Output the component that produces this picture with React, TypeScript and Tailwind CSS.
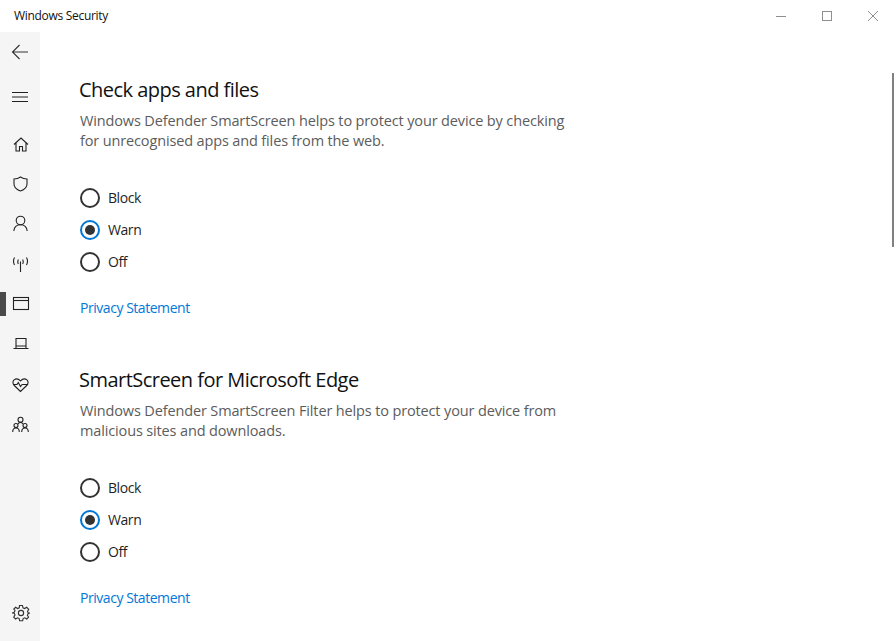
const F = { fontFamily: '"Open Sans", "Noto Sans", sans-serif' };

function Radio({ label, on }: { label: string; on?: boolean }) {
  return (
    <div className="flex h-8 items-center">
      <div className={`flex h-5 w-5 items-center justify-center rounded-full border-2 ${on ? "border-[#0078d7]" : "border-[#333333]"}`}>
        {on && <div className="h-2.5 w-2.5 rounded-full bg-[#333333]" />}
      </div>
      <span className="ml-2 text-[14px] tracking-[-0.42px] text-[#1f1f1f]">{label}</span>
    </div>
  );
}

function Section({ title, lines }: { title: string; lines: string[] }) {
  return (
    <section className="h-[290px]">
      <h2 className="-ml-px h-7 text-[20px] leading-7 tracking-[-0.53px] text-[#111111]">{title}</h2>
      <div className="mt-[7px] text-[14.5px] leading-5 tracking-[-0.14px] text-[#5c5c5c]">
        {lines.map((l) => <div key={l} className="whitespace-nowrap">{l}</div>)}
      </div>
      <div className="mt-[30.5px]">
        <Radio label="Block" />
        <Radio label="Warn" on />
        <Radio label="Off" />
      </div>
      <div className="mt-[20.5px] text-[14px] leading-5 tracking-[-0.46px] text-[#0078d7]">Privacy Statement</div>
    </section>
  );
}

const P = { fill: "none", stroke: "#222222", strokeWidth: 1.1 };

function NavIcon({ children, active }: { children: React.ReactNode; active?: boolean }) {
  return (
    <div className="relative flex h-10 w-10 items-center justify-center">
      {active && <div className="absolute left-0 top-[8px] h-6 w-[6px] bg-[#4a4a4a]" />}
      <svg width="20" height="20" viewBox="0 0 20 20" {...P}>{children}</svg>
    </div>
  );
}

export default function App() {
  return (
    <div className="flex h-[641px] w-[896px] flex-col overflow-hidden bg-white" style={F}>
      <header className="flex h-8 shrink-0 items-center justify-between">
        <span className="ml-[14px] text-[12px] tracking-[-0.3px] text-[#111111]">Windows Security</span>
        <div className="flex items-center">
          <svg width="46" height="32" viewBox="0 0 46 32" stroke="#8f8f8f" fill="none"><path d="M18 16.500h10" /></svg>
          <svg width="46" height="32" viewBox="0 0 46 32" stroke="#8f8f8f" fill="none"><rect x="18.500" y="11.500" width="9" height="9" /></svg>
          <svg width="46" height="32" viewBox="0 0 46 32" stroke="#8f8f8f" fill="none"><path d="M18 11l10 10M28 11L18 21" /></svg>
        </div>
      </header>
      <div className="flex min-h-0 flex-1">
        <nav className="flex w-10 shrink-0 flex-col bg-[#f5f5f5]">
          <div className="flex h-10 items-center justify-center">
            <svg width="18" height="16" viewBox="0 0 18 16" fill="none" stroke="#333333" strokeWidth="1.1"><path d="M17 8H1.500M8.500 1L1.500 8l7 7" /></svg>
          </div>
          <div className="mt-[5px] flex h-10 items-center justify-center">
            <svg width="18" height="12" viewBox="0 0 18 12" fill="none" stroke="#222222" strokeWidth="1.1"><path d="M1 1.500h16M1 6h16M1 10.500h16" /></svg>
          </div>
          <div className="mt-[7px]">
            <NavIcon><path d="M4 10.500l7-6.500 7 6.500M6 9V17h3.500v-4.500h3V17H16V9" /></NavIcon>
            <NavIcon><path d="M10.500 3c2 1.400 4.300 2 6.500 2v5c0 3.400-2.600 5.700-6.500 7-3.900-1.300-6.500-3.600-6.500-7V5c2.200 0 4.500-.6 6.500-2z" /></NavIcon>
            <NavIcon><circle cx="10.500" cy="6.500" r="4.300" /><path d="M3.800 17c.4-3.800 3-6.200 6.700-6.200s6.300 2.400 6.700 6.200" /></NavIcon>
            <NavIcon><path d="M10.500 7.500V18M8.300 5.500c-.7 1.500-.7 3 0 4.500M12.700 5.500c.7 1.500.7 3 0 4.500M4.500 3.500c-1.300 2.400-1.300 5 0 7.500M16.500 3.500c1.300 2.400 1.300 5 0 7.500" /></NavIcon>
            <NavIcon active><rect x="3.500" y="3.500" width="15" height="12" /><path d="M3.500 6.500h15" /></NavIcon>
            <NavIcon><path d="M6 4.500h10v7.500H6zM3.500 14.500h15M6 12v2.500M16 12v2.500" /></NavIcon>
            <NavIcon><path d="M10.500 17.500L4.300 11.500C2.500 9.700 2.500 7.200 4.100 5.900c1.700-1.300 4.400-1 6.400 1 2-2 4.700-2.300 6.400-1 1.600 1.300 1.600 3.800-.2 5.600zM3 10.500h4l1.300-2 2.200 4 1.700-2h6" /></NavIcon>
            <NavIcon><circle cx="10.500" cy="5.800" r="2.500" /><circle cx="6" cy="11.500" r="2" /><circle cx="15" cy="11.500" r="2" /><path d="M2.700 18c0-2.300 1.300-4 3.300-4s3.300 1.700 3.300 4M11.700 18c0-2.300 1.300-4 3.300-4s3.300 1.700 3.300 4M8 10c.6-1 1.500-1.600 2.500-1.600s1.900.6 2.500 1.600" /></NavIcon>
          </div>
          <div className="mt-auto mb-2 ml-px flex h-10 items-center justify-center">
            <svg width="18" height="18" viewBox="0 0 24 24" fill="none" stroke="#333333" strokeWidth="1.500"><circle cx="12" cy="12" r="3.500" /><path d="M10 2h4l.6 3 2.200 1 2.700-1.600 2.800 2.800L20.700 9.900l.8 1.800 2.500.3v0l-2.500 1-1 1.900 1.600 2.700-2.400 2.400-2.700-1.600-2.200 1-.6 3h-4l-.6-3-2.200-1-2.700 1.600-2.400-2.400L4 14.500l-1-2.200-3-.3v0l3-1 1-2.200L2.400 6.800l2.400-2.400L7.500 6l2.200-1z" /></svg>
          </div>
        </nav>
        <main className="relative min-w-0 flex-1 pl-10 pt-[44px]">
          <Section title="Check apps and files" lines={["Windows Defender SmartScreen helps to protect your device by checking", "for unrecognised apps and files from the web."]} />
          <Section title="SmartScreen for Microsoft Edge" lines={["Windows Defender SmartScreen Filter helps to protect your device from", "malicious sites and downloads."]} />
          <div className="absolute right-[2px] top-[41px] h-[174px] w-[2px] bg-[#808080]" />
        </main>
      </div>
    </div>
  );
}
